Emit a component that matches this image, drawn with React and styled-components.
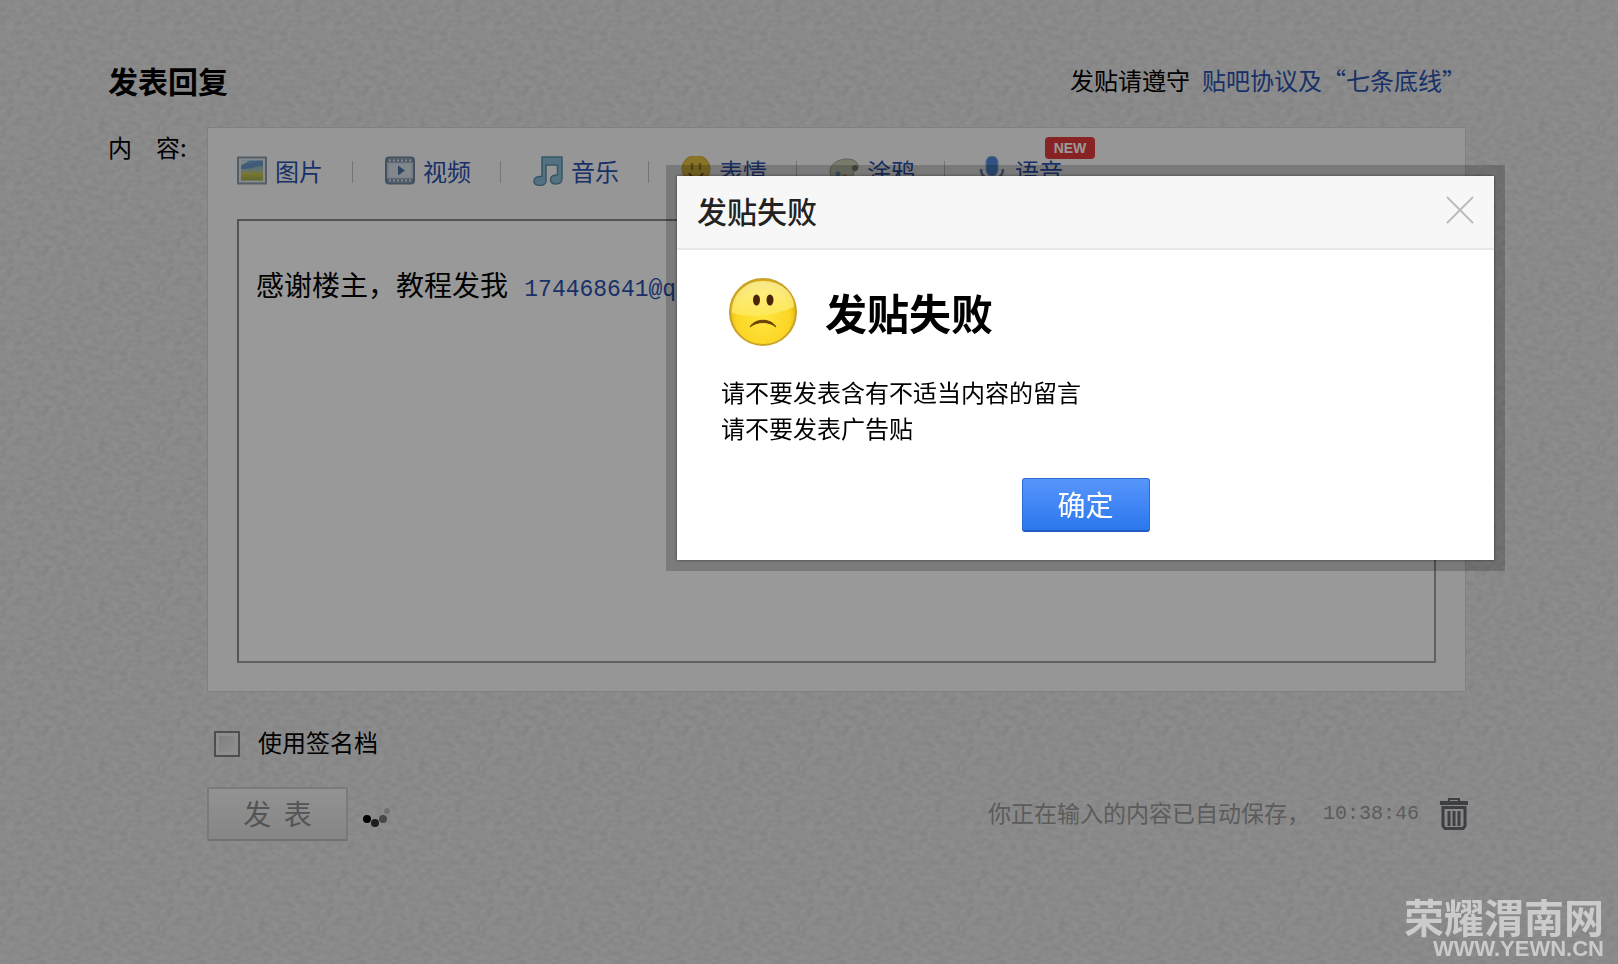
import { useState } from 'react';
import styled, { createGlobalStyle, css } from 'styled-components';

const GlobalStyle = createGlobalStyle`
  * {
    box-sizing: border-box;
  }
  body {
    margin: 0;
    background: #e8e8e8;
    color: #000;
    font-family: 'Noto Sans CJK SC', sans-serif;
    font-size: 24px;
  }
  button, input {
    font-family: inherit;
  }
`;

const Page = styled.main`
  position: relative;
  min-height: 100vh;
  padding: 60px 152px 60px 108px;
  background-color: #ececec;
  background-image: url("data:image/svg+xml,%3Csvg xmlns='http://www.w3.org/2000/svg' width='160' height='160'%3E%3Cfilter id='n'%3E%3CfeTurbulence type='fractalNoise' baseFrequency='0.14 0.2' numOctaves='2' stitchTiles='stitch'/%3E%3CfeColorMatrix values='0 0 0 0 0 0 0 0 0 0 0 0 0 0 0 0.14 0 0 0 -0.04'/%3E%3C/filter%3E%3Crect width='160' height='160' filter='url(%23n)'/%3E%3C/svg%3E");
`;

const PageHeader = styled.header`
  display: flex;
  justify-content: space-between;
  align-items: center;
  height: 40px;
  margin-bottom: 27px;
`;

const PageTitle = styled.h1`
  margin: 0;
  font-size: 30px;
  line-height: 40px;
  font-weight: 700;
`;

const Rules = styled.p`
  margin: 0;
  line-height: 40px;
`;

const Link = styled.a`
  color: #2b52ae;
  text-decoration: none;
`;

const RulesLink = styled(Link)`
  margin-left: 12px;
`;

const FormGrid = styled.form`
  display: grid;
  grid-template-columns: 99px 1fr;
`;

const FieldLabel = styled.span`
  line-height: 40px;
  white-space: pre;
`;

const Panel = styled.div`
  padding: 24px 29px 28px;
  background: #fbfbfb;
  border: 1px solid #d6d6d6;
`;

const Toolbar = styled.div`
  display: flex;
  height: 40px;
  margin-bottom: 27px;
`;

const ToolItem = styled.div`
  position: relative;
  display: flex;
  align-items: center;

  & + &::before {
    content: '';
    width: 1px;
    height: 22px;
    margin: 0 32px 0 29px;
    background: #c4c4c4;
  }
`;

const ToolButton = styled.button`
  display: flex;
  align-items: center;
  gap: 8px;
  padding: 0 0 2px;
  border: none;
  background: none;
  color: #2b52ae;
  font-size: 24px;
  line-height: 36px;
  cursor: pointer;

  svg {
    width: 30px;
    height: 30px;
  }
`;

const NewBadge = styled.span`
  position: absolute;
  top: -15px;
  right: -32px;
  width: 50px;
  height: 22px;
  border-radius: 4px;
  background: #e33b3b;
  color: #fff;
  font: 700 14px/22px 'Liberation Sans', sans-serif;
  text-align: center;
`;

const Editor = styled.div`
  height: 444px;
  padding: 45px 17px;
  border: 2px solid #a0a0a0;
  border-top-color: #8c8c8c;
  border-left-color: #8c8c8c;
  background: #fff;
  font-size: 28px;
  line-height: 36px;
  outline: none;
`;

const MailLink = styled(Link)`
  margin-left: 10px;
  font: 23px/36px 'Liberation Mono', monospace;
`;

const Footer = styled.div`
  grid-column: 2;
`;

const SignLabel = styled.label`
  display: flex;
  align-items: center;
  gap: 18px;
  width: max-content;
  height: 40px;
  margin: 32px 0 23px 7px;
`;

const SignText = styled.span`
  padding-bottom: 6px;
`;

const Checkbox = styled.input`
  appearance: none;
  width: 26px;
  height: 26px;
  margin: 0;
  border: 2px solid #838383;
  background: linear-gradient(135deg, #cfcfcf, #f4f4f4);
  box-shadow: inset 0 0 0 3px #ededed;

  &:checked {
    background: #2b52ae;
  }
`;

const SubmitRow = styled.div`
  display: flex;
  align-items: center;
  height: 54px;
`;

const PublishButton = styled.button`
  width: 141px;
  height: 54px;
  padding: 0 0 2px;
  border: 2px solid #cbcbcb;
  border-bottom-color: #bdbdbd;
  background: linear-gradient(#f4f4f4, #dfdfdf);
  color: #8c8c8c;
  font-size: 28px;
  white-space: pre;
`;

const Spinner = styled.svg`
  width: 30px;
  height: 24px;
  margin: 8px 0 0 14px;
`;

const SaveHint = styled.span`
  margin-left: auto;
  padding-bottom: 4px;
  color: #999;
  font-size: 23px;
`;

const SaveTime = styled.time`
  margin: 0 21px 0 13px;
  color: #999;
  font: 20px/36px 'Liberation Mono', monospace;
`;

const IconButton = styled.button`
  display: flex;
  padding: 0;
  border: none;
  background: none;
  cursor: pointer;
`;

const TrashButton = styled(IconButton)`
  margin-right: -2px;

  svg {
    width: 28px;
    height: 32px;
  }
`;

const Overlay = styled.div`
  position: fixed;
  inset: 0;
  display: flex;
  align-items: flex-start;
  justify-content: flex-end;
  padding: 165px 113px 0;
  background: rgba(0, 0, 0, 0.4);
`;

const DialogFrame = styled.section`
  width: 100%;
  max-width: 839px;
  padding: 11px;
  background: rgba(0, 0, 0, 0.2);
`;

const Dialog = styled.div`
  background: #fff;
  box-shadow: 0 0 3px rgba(0, 0, 0, 0.5);
`;

const DialogHeader = styled.div`
  display: flex;
  align-items: center;
  justify-content: space-between;
  height: 74px;
  padding: 0 20px 5px;
  border-bottom: 2px solid #e8e8e8;
  background: #f7f7f7;

  svg {
    width: 28px;
    height: 28px;
  }
`;

const DialogTitle = styled.h2`
  margin: 0;
  color: #222;
  font-size: 30px;
  line-height: 40px;
  font-weight: 500;
`;

const DialogBody = styled.div`
  padding: 28px 44px;
`;

const FailRow = styled.div`
  display: flex;
  align-items: center;
  gap: 27px;
  height: 68px;
  margin: 0 0 28px 7px;

  svg {
    width: 70px;
    height: 70px;
  }
`;

const FailTitle = styled.h3`
  margin: 0;
  font-size: 42px;
  line-height: 60px;
  font-weight: 700;
`;

const Reason = styled.p`
  margin: 0;
  line-height: 36px;
`;

const ConfirmButton = styled.button`
  display: block;
  width: 128px;
  height: 54px;
  margin: 32px auto 0;
  padding: 0 0 2px;
  border: 1px solid #2c6bd0;
  border-bottom: 2px solid #1f5cc4;
  border-radius: 3px;
  background: linear-gradient(#5796fb, #2c77ee);
  color: #fff;
  font-size: 28px;
  cursor: pointer;
`;

const watermarkText = css`
  color: #cbcbcb;
  font-weight: 700;
`;

const Watermark = styled.div`
  position: fixed;
  right: 14px;
  bottom: 5px;
  text-align: right;
`;

const WatermarkName = styled.div`
  ${watermarkText}
  font-size: 40px;
  line-height: 46px;
`;

const WatermarkSite = styled.div`
  ${watermarkText}
  font-family: 'Liberation Sans', sans-serif;
  font-size: 22px;
  line-height: 20px;
`;

const PictureIcon = () => (
    <svg viewBox="0 0 30 30" aria-hidden="true">
        <defs>
            <linearGradient id="sky" x1="0" y1="0" x2="0" y2="1">
                <stop offset="0" stopColor="#6f9fd0" />
                <stop offset="0.5" stopColor="#a9c3b5" />
                <stop offset="0.65" stopColor="#cdc653" />
                <stop offset="1" stopColor="#9eac4a" />
            </linearGradient>
        </defs>
        <rect x="1" y="1.5" width="28" height="26" fill="#dfe8ee" stroke="#8b9dab" strokeWidth="2" />
        <rect x="4" y="4.5" width="22" height="20" fill="url(#sky)" />
        <path d="M4 11C9 6 14 8 18 6s6-1 8-1v5c-6-1-12 4-22 3z" fill="#6a98c6" />
        <path d="M4 4.5h9L4 9z" fill="#d5e2ec" />
    </svg>
);

const VideoIcon = () => (
    <svg viewBox="0 0 30 30" aria-hidden="true">
        <rect x="1" y="1.5" width="28" height="26" rx="3" fill="#c3d0dc" stroke="#71869f" strokeWidth="2" />
        <path d="M2 4.5h26M2 24.5h26" stroke="#8195ab" strokeWidth="4" />
        <path d="M4 4.5h23M4 24.5h23" stroke="#dce5ed" strokeWidth="2" strokeDasharray="2 2" />
        <rect x="4" y="7.5" width="22" height="14" fill="#d9e2ec" />
        <path d="M13 9.500l7 5-7 5z" fill="#4d72a5" />
    </svg>
);

const MusicIcon = () => (
    <svg viewBox="0 0 30 30" aria-hidden="true">
        <path
            d="M9 1h20v21.500c0 3.500-2.500 5.500-6 5.500s-5.500-1.500-5.500-4.500 3-5 7-4.500V9H13v16c0 2.500-2.500 4.500-6 4.500s-6-1.500-6-4.500 3-5 8-4.500z"
            fill="#8bbdd6"
            stroke="#5e90ab"
            strokeWidth="1.5"
            strokeLinejoin="round"
        />
    </svg>
);

const SmileIcon = () => (
    <svg viewBox="0 0 30 30" aria-hidden="true">
        <circle cx="15" cy="13" r="14" fill="#e5c040" stroke="#cbab3c" />
        <path d="M11 8v5M19 8v5" stroke="#a4842c" strokeWidth="2.5" strokeLinecap="round" />
        <path d="M8 17c3 6 11 6 14 0" fill="none" stroke="#7b5b12" strokeWidth="2" />
    </svg>
);

const DoodleIcon = () => (
    <svg viewBox="0 0 30 30" aria-hidden="true">
        <path
            d="M1 16C1 8 9 3 18 3c8 0 12 4 11 9-1 3-5 3-5 6 0 4 2 5-3 7C12 28 1 24 1 16z"
            fill="#cccdb9"
            stroke="#a2a38c"
        />
        <circle cx="26" cy="12" r="3" fill="#848773" />
        <circle cx="9" cy="18" r="2.5" fill="#6e93bb" />
        <circle cx="16" cy="21" r="2.5" fill="#c98652" />
    </svg>
);

const MicIcon = () => (
    <svg viewBox="0 0 30 30" aria-hidden="true">
        <rect x="9" y="0" width="12" height="20" rx="6" fill="#5289d5" stroke="#8eb5e4" />
        <path d="M4 13c0 14 22 14 22 0M15 23v5M9 28.500h12" fill="none" stroke="#6d88aa" strokeWidth="2.5" />
    </svg>
);

const TrashIcon = () => (
    <svg viewBox="0 0 28 32" aria-hidden="true" fill="none" stroke="#666970">
        <path d="M0 5h28" strokeWidth="4" />
        <path d="M9 3V1h10v2" strokeWidth="2" />
        <path d="M3 9.500h22V28l-2 2.500H5L3 28z" strokeWidth="3" />
        <path d="M9 13v15M14 13v15M19 13v15" strokeWidth="3" />
    </svg>
);

const CloseIcon = () => (
    <svg viewBox="0 0 28 28" aria-hidden="true">
        <path d="M1 1l26 26M27 1L1 27" stroke="#bcbcbc" strokeWidth="2" />
    </svg>
);

const SadFace = () => (
    <svg viewBox="0 0 70 70" aria-hidden="true">
        <defs>
            <radialGradient id="face" cx="0.5" cy="0.6" r="0.55">
                <stop offset="0" stopColor="#ffe640" />
                <stop offset="0.75" stopColor="#fbd524" />
                <stop offset="1" stopColor="#dcae10" />
            </radialGradient>
            <linearGradient id="shine" x1="0" y1="0" x2="0" y2="1">
                <stop offset="0" stopColor="#fff6a8" />
                <stop offset="1" stopColor="#fdea5c" />
            </linearGradient>
        </defs>
        <circle cx="35" cy="35" r="33" fill="url(#face)" stroke="#c9a22a" strokeWidth="2" />
        <path d="M4 36C3 18 17 4 35 4s31 12 31 26C48 38 24 42 4 36z" fill="url(#shine)" opacity="0.8" />
        <ellipse cx="28.5" cy="23" rx="3.5" ry="5.5" fill="#4b2508" />
        <ellipse cx="42" cy="23" rx="3.5" ry="5.5" fill="#4b2508" />
        <path d="M22 50c5-9 21-9 26 0-7-6-19-6-26 0z" fill="#6b4308" stroke="#6b4308" strokeLinejoin="round" />
    </svg>
);

const tools = [
    { name: '图片', Icon: PictureIcon },
    { name: '视频', Icon: VideoIcon },
    { name: '音乐', Icon: MusicIcon },
    { name: '表情', Icon: SmileIcon },
    { name: '涂鸦', Icon: DoodleIcon },
    { name: '语音', Icon: MicIcon, isNew: true },
];

const App = () => {
    const [isDialogOpen, setIsDialogOpen] = useState(true);
    const [useSign, setUseSign] = useState(false);

    const closeDialog = () => setIsDialogOpen(false);

    return (
        <>
            <GlobalStyle />
            <Page lang="zh-CN">
                <PageHeader>
                    <PageTitle>发表回复</PageTitle>
                    <Rules>
                        发贴请遵守<RulesLink href="#rules">贴吧协议及“七条底线”</RulesLink>
                    </Rules>
                </PageHeader>

                <FormGrid onSubmit={e => e.preventDefault()}>
                    <FieldLabel id="content-label">内　容:</FieldLabel>
                    <Panel>
                        <Toolbar>
                            {tools.map(({ name, Icon, isNew }) => (
                                <ToolItem key={name}>
                                    <ToolButton type="button"><Icon />{name}</ToolButton>
                                    {isNew && <NewBadge>NEW</NewBadge>}
                                </ToolItem>
                            ))}
                        </Toolbar>
                        <Editor
                            role="textbox"
                            aria-multiline="true"
                            aria-labelledby="content-label"
                            contentEditable
                            suppressContentEditableWarning
                            spellCheck={false}
                        >
                            感谢楼主，教程发我 <MailLink href="#mail">174468641@qq.com</MailLink>
                        </Editor>
                    </Panel>

                    <Footer>
                        <SignLabel>
                            <Checkbox type="checkbox" checked={useSign} onChange={e => setUseSign(e.target.checked)} />
                            <SignText>使用签名档</SignText>
                        </SignLabel>
                        <SubmitRow>
                            <PublishButton type="submit" disabled>{'发  表'}</PublishButton>
                            <Spinner viewBox="0 0 30 24" aria-hidden="true">
                                <circle cx="5" cy="13" r="4" fill="#000" />
                                <circle cx="13" cy="17" r="4" fill="#333" />
                                <circle cx="21" cy="13" r="4" fill="#777" />
                                <circle cx="25" cy="5" r="3" fill="#bbb" />
                            </Spinner>
                            <SaveHint>你正在输入的内容已自动保存，</SaveHint>
                            <SaveTime>10:38:46</SaveTime>
                            <TrashButton type="button" aria-label="清空"><TrashIcon /></TrashButton>
                        </SubmitRow>
                    </Footer>
                </FormGrid>
            </Page>

            {isDialogOpen && (
                <Overlay lang="zh-CN">
                    <DialogFrame role="dialog" aria-modal="true" aria-labelledby="dialog-title">
                        <Dialog>
                            <DialogHeader>
                                <DialogTitle id="dialog-title">发贴失败</DialogTitle>
                                <IconButton type="button" aria-label="关闭" onClick={closeDialog}><CloseIcon /></IconButton>
                            </DialogHeader>
                            <DialogBody>
                                <FailRow>
                                    <SadFace />
                                    <FailTitle>发贴失败</FailTitle>
                                </FailRow>
                                <Reason>请不要发表含有不适当内容的留言</Reason>
                                <Reason>请不要发表广告贴</Reason>
                                <ConfirmButton type="button" onClick={closeDialog}>确定</ConfirmButton>
                            </DialogBody>
                        </Dialog>
                    </DialogFrame>
                </Overlay>
            )}

            <Watermark lang="zh-CN">
                <WatermarkName>荣耀渭南网</WatermarkName>
                <WatermarkSite>WWW.YEWN.CN</WatermarkSite>
            </Watermark>
        </>
    );
};

export default App;
